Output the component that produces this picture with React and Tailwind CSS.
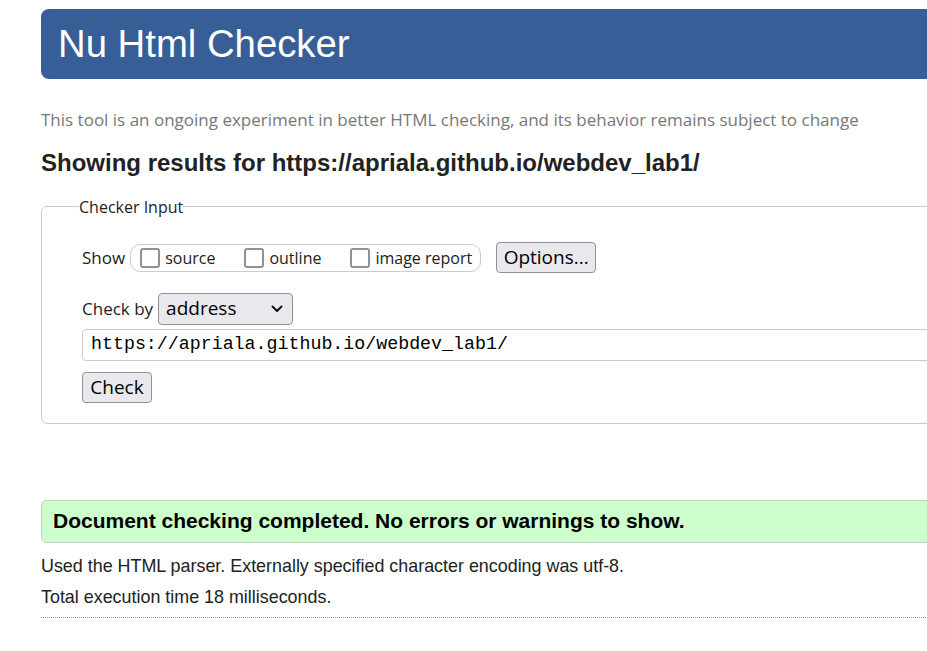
import React from "react";

const ui = { fontFamily: '"Open Sans", "Noto Sans", sans-serif' };
const arial = { fontFamily: '"Liberation Sans", Arial, sans-serif' };
const mono = { fontFamily: '"Liberation Mono", "DejaVu Sans Mono", monospace' };

const Box = ({ label }) => (
  <label className="flex items-center gap-[5px] whitespace-nowrap">
    <span className="w-[20px] h-[20px] border-2 border-[#8f8f9d] rounded-[3px] bg-white" />
    <span className="text-[16px] text-[#222]">{label}</span>
  </label>
);

const App = () => {
  return (
    <div className="w-full min-h-screen overflow-hidden bg-white">
      <div className="w-[1100px] pl-[41px] pt-[9px]">
        {/* Header */}
        <div className="h-[70px] bg-[#375e97] rounded-l-[8px] flex items-center pl-[17px]">
          <h1 className="text-white text-[38.3px] leading-none" style={arial}>
            Nu Html Checker
          </h1>
        </div>

        <p className="mt-[28px] text-[17px] text-[#777] whitespace-nowrap" style={ui}>
          This tool is an ongoing experiment in better HTML checking, and its behavior remains subject to change
        </p>

        <h2 className="mt-[12px] text-[24px] font-bold text-[#222] whitespace-nowrap" style={arial}>
          Showing results for https://apriala.github.io/webdev_lab1/
        </h2>

        {/* Checker input */}
        <fieldset className="mt-[14px] border border-[#ccc] rounded-l-[6px] pl-[37px] h-[229px]" style={ui}>
          <legend className="text-[16px] text-[#222] px-0">Checker Input</legend>

          <div className="flex items-center mt-[24px] ml-[3px]">
            <span className="text-[17px] text-[#222] mr-[5px]">Show</span>
            <div className="flex items-center gap-[29px] border border-[#ccc] rounded-[10px] h-[28px] pl-[9px] pr-[8px]">
              <Box label="source" />
              <Box label="outline" />
              <Box label="image report" />
            </div>
            <button className="ml-[15px] h-[31px] w-[100px] bg-[#e9e9ed] border border-[#8f8f9d] rounded-[4px] text-[19px] text-black -translate-y-[1px]">
              Options...
            </button>
          </div>

          <div className="flex items-center mt-[19px] ml-[3px]">
            <span className="text-[17px] text-[#222] mr-[5px]">Check by</span>
            <div className="h-[32px] w-[135px] bg-[#e9e9ed] border border-[#8f8f9d] rounded-[4px] flex items-center justify-between pl-[7px] pr-[9px]">
              <span className="text-[19px] text-black">address</span>
              <svg width="12" height="8" viewBox="0 0 12 8" fill="none">
                <path d="M1.5 1.5 6 6l4.5-4.5" stroke="#111" strokeWidth="2" strokeLinecap="round" strokeLinejoin="round" />
              </svg>
            </div>
          </div>

          <div className="ml-[3px] mt-[4px] h-[32px] border border-[#ccc] rounded-l-[4px] flex items-center pl-[8px]">
            <span className="text-[18.3px] text-black" style={mono}>
              https://apriala.github.io/webdev_lab1/
            </span>
          </div>

          <button className="ml-[3px] mt-[11px] h-[31px] w-[70px] bg-[#e9e9ed] border border-[#8f8f9d] rounded-[4px] text-[19px] text-black">
            Check
          </button>
        </fieldset>

        {/* Results */}
        <div className="mt-[76px] h-[43px] bg-[#ccffcc] border border-[#ccc] rounded-l-[5px] flex items-center pl-[11px]">
          <span className="text-[21px] font-bold text-black whitespace-nowrap" style={arial}>
            Document checking completed. No errors or warnings to show.
          </span>
        </div>

        <p className="mt-[10px] text-[17.9px] text-[#222] whitespace-nowrap" style={arial}>
          Used the HTML parser. Externally specified character encoding was utf-8.
        </p>
        <p className="mt-[5px] text-[17.9px] text-[#222]" style={arial}>
          Total execution time 18 milliseconds.
        </p>

        <div className="mt-[6px] border-t border-dotted border-[#999]" />
      </div>
    </div>
  );
};

export default App;
